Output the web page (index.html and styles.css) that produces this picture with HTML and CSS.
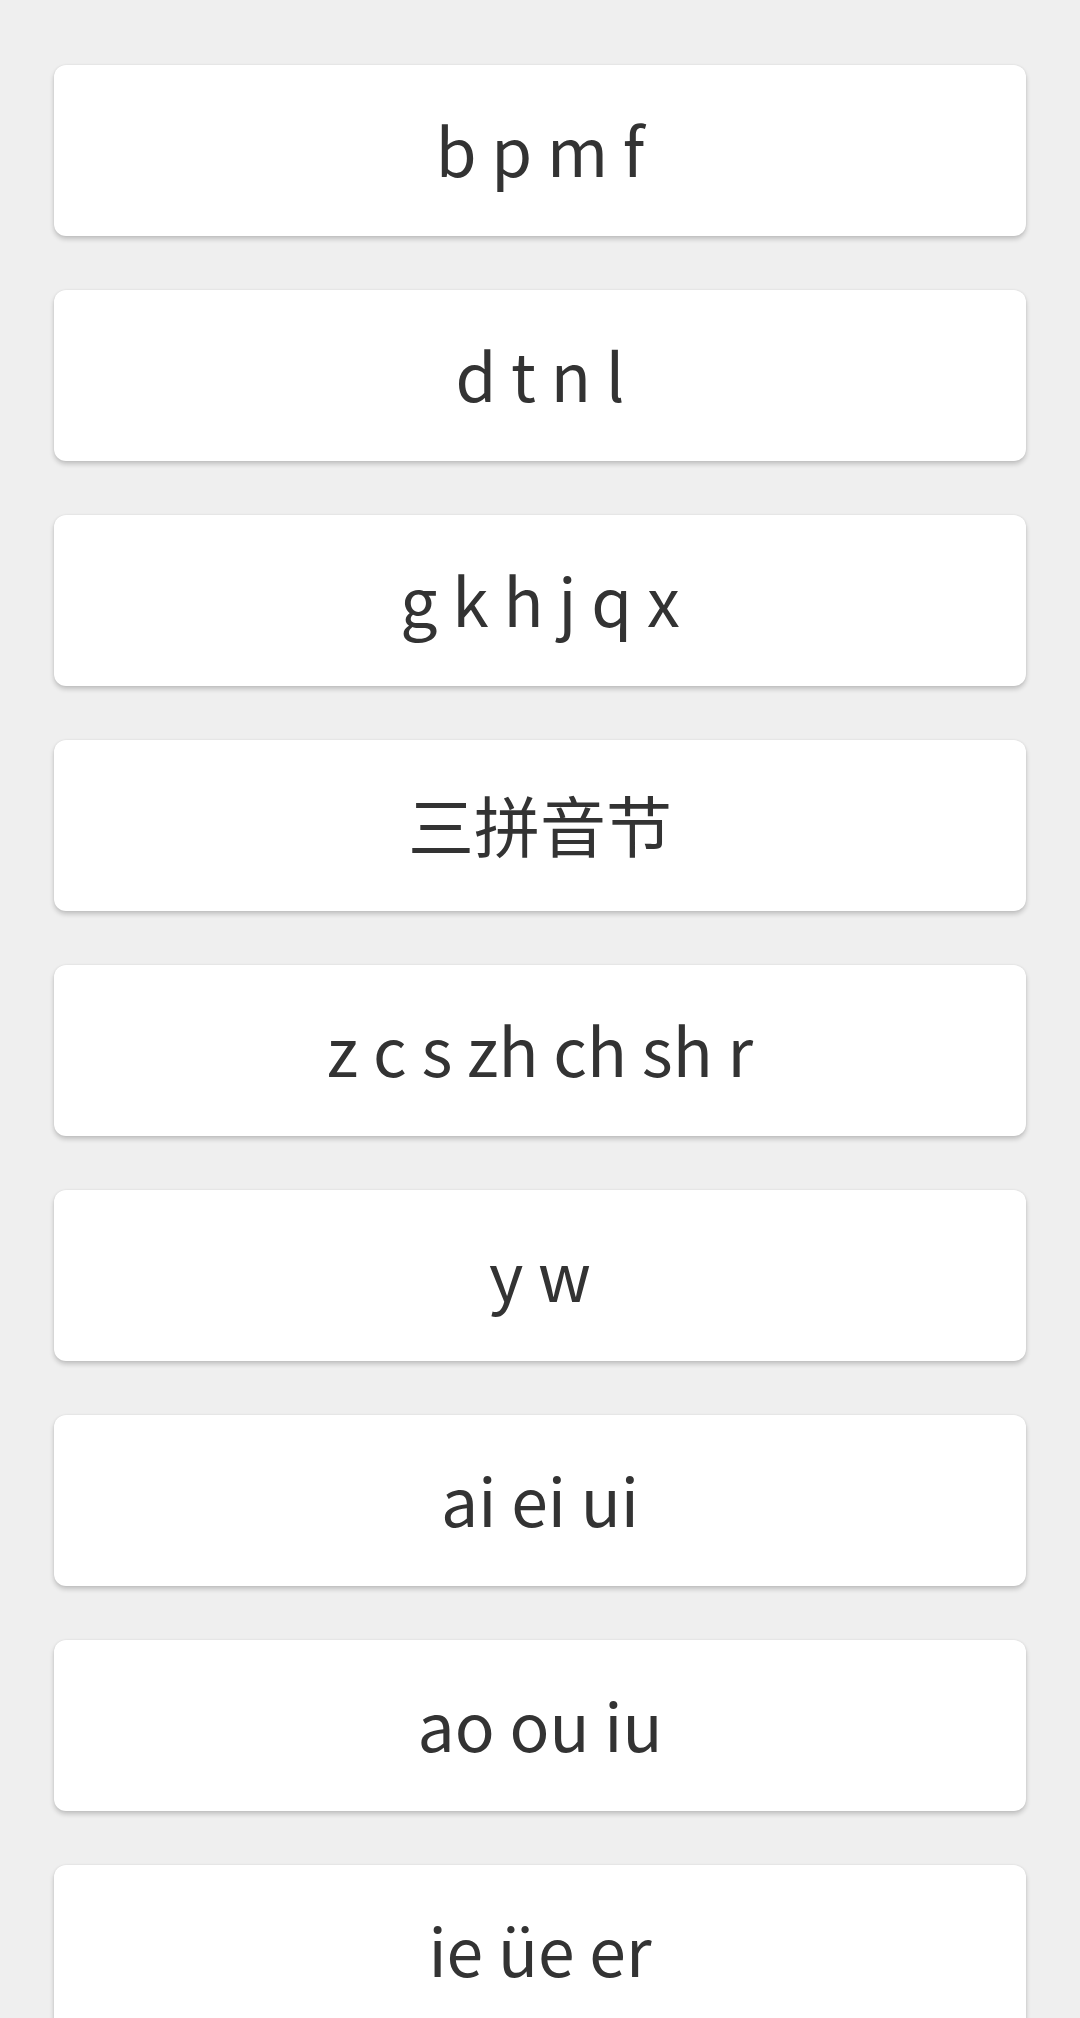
FILE: index.html
```html
<!DOCTYPE html>
<html>
    <head>
        <title>拼音</title>
        <link rel="stylesheet" href="styles.css">
    </head>
    <body>
        <div class="lessonList">
            <div class="lessonCard">b p m f</div>
            <div class="lessonCard">d t n l</div>
            <div class="lessonCard">g k h j q x</div>
            <div class="lessonCard">三拼音节</div>
            <div class="lessonCard">z c s zh ch sh r</div>
            <div class="lessonCard">y w</div>
            <div class="lessonCard">ai ei ui</div>
            <div class="lessonCard">ao ou iu</div>
            <div class="lessonCard">ie üe er</div>
        </div>
    </body>
</html>
```
FILE: styles.css
```css
html,body{
    margin: 0;
    padding: 0;
    background-color: #efefef;
}
.lessonList{
    display: flex;
    flex-direction: column;
    gap: 54px;
    padding: 65px 54px 0 54px;
    height: 2018px;
    box-sizing: border-box;
    overflow: hidden;
}
.lessonList .lessonCard{
    flex: none;
    height: 171px;
    box-sizing: border-box;
    padding-bottom: 5px;
    background-color: #ffffff;
    border-radius: 12px;
    box-shadow: 0 3px 5px rgba(0,0,0,0.2), 0 0 2px rgba(0,0,0,0.08);
    display: flex;
    align-items: center;
    justify-content: center;
    font-family: "Noto Sans CJK SC", "Noto Sans", sans-serif;
    font-size: 66px;
    color: #333333;
}
```
